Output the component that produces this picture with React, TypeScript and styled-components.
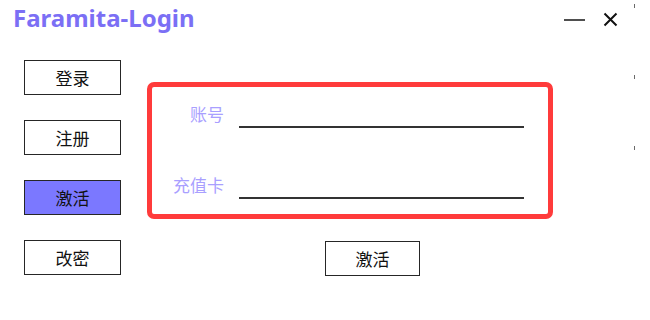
import styled, { createGlobalStyle } from "styled-components";

const GlobalStyle = createGlobalStyle`
  html, body {
    margin: 0;
    padding: 0;
    background: #ffffff;
  }
  body {
    font-family: "Noto Sans", "Noto Sans CJK SC", sans-serif;
  }
  * {
    box-sizing: border-box;
  }
`;

const Window = styled.div`
  width: 650px;
  height: 320px;
  display: flex;
  background: #ffffff;
  overflow: hidden;
`;

const Main = styled.div`
  width: 634px;
  display: flex;
  flex-direction: column;
`;

const EdgeStrip = styled.div`
  width: 2px;
  display: flex;
  flex-direction: column;
  gap: 67px;
  padding-top: 4px;
`;

const Tick = styled.span`
  display: block;
  width: 1px;
  height: 4px;
  background: #6a6a6a;
`;

const TitleBar = styled.div`
  height: 40px;
  display: flex;
  align-items: center;
  justify-content: space-between;
  padding: 0 16px 0 13px;
`;

const Title = styled.h1`
  margin: 0;
  font-family: "Noto Sans", sans-serif;
  font-size: 24px;
  font-weight: 700;
  line-height: 1;
  color: #7b6ff5;
  margin-top: -4px;
`;

const Controls = styled.div`
  display: flex;
  align-items: center;
  gap: 18px;
  margin-top: -1px;
`;

const ControlButton = styled.button`
  border: none;
  background: transparent;
  padding: 0;
  display: flex;
  align-items: center;
  cursor: pointer;
`;

const Body = styled.div`
  display: flex;
  gap: 26px;
  padding: 20px 0 0 24px;
`;

const Nav = styled.nav`
  display: flex;
  flex-direction: column;
  gap: 25px;
`;

const Button = styled.button<{ $active?: boolean }>`
  width: 97px;
  height: 35px;
  border: 1.5px solid #262626;
  background: ${({ $active }) => ($active ? "#7b78ff" : "#ffffff")};
  font-family: "Noto Sans CJK SC", sans-serif;
  font-size: 17px;
  color: #111111;
  padding: 0;
  cursor: pointer;
`;

const Content = styled.div`
  display: flex;
  flex-direction: column;
  align-items: flex-start;
  gap: 22px;
  padding-top: 22px;
`;

const Panel = styled.div`
  width: 406px;
  height: 137px;
  border: 5px solid #ff3b3b;
  border-radius: 7px;
  padding: 11px 0 0 0;
  display: flex;
  flex-direction: column;
  gap: 41px;
`;

const Field = styled.label`
  display: flex;
  align-items: center;
  gap: 15px;
`;

const FieldLabel = styled.span`
  width: 72px;
  text-align: right;
  font-family: "Noto Sans CJK SC", sans-serif;
  font-size: 17px;
  color: #a99fff;
`;

const FieldInput = styled.input`
  width: 285px;
  height: 30px;
  border: none;
  border-bottom: 2px solid #333333;
  background: transparent;
  outline: none;
  font-size: 16px;
  font-family: "Noto Sans CJK SC", sans-serif;
`;

const SubmitButton = styled(Button)`
  width: 95px;
  margin-left: 178px;
`;

const navItems = [
  { label: "登录" },
  { label: "注册" },
  { label: "激活", active: true },
  { label: "改密" },
];

export default function App() {
  return (
    <>
      <GlobalStyle />
      <Window>
        <Main>
          <TitleBar>
            <Title>Faramita-Login</Title>
            <Controls>
              <ControlButton aria-label="minimize">
                <svg width="21" height="4" viewBox="0 0 21 4">
                  <line x1="0" y1="2" x2="21" y2="2" stroke="#222" strokeWidth="1.6" />
                </svg>
              </ControlButton>
              <ControlButton aria-label="close">
                <svg width="15" height="15" viewBox="0 0 15 15">
                  <path d="M1.5 1.5 L13.5 13.5 M13.5 1.5 L1.5 13.5" stroke="#111" strokeWidth="2" />
                </svg>
              </ControlButton>
            </Controls>
          </TitleBar>
          <Body>
            <Nav>
              {navItems.map((item) => (
                <Button key={item.label} $active={item.active}>
                  {item.label}
                </Button>
              ))}
            </Nav>
            <Content>
              <Panel>
                <Field>
                  <FieldLabel>账号</FieldLabel>
                  <FieldInput />
                </Field>
                <Field>
                  <FieldLabel>充值卡</FieldLabel>
                  <FieldInput />
                </Field>
              </Panel>
              <SubmitButton>激活</SubmitButton>
            </Content>
          </Body>
        </Main>
        <EdgeStrip>
          <Tick />
          <Tick />
          <Tick />
        </EdgeStrip>
      </Window>
    </>
  );
}
